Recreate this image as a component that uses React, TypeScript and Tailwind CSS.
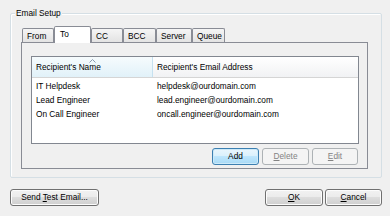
import type { ReactNode } from 'react';

type ButtonKind = 'normal' | 'default' | 'disabled';

const buttonStyles: Record<ButtonKind, string> = {
  normal:
    'border-[#707070] text-black bg-[linear-gradient(to_bottom,#f2f2f2_0%,#ebebeb_49%,#dddddd_50%,#cfcfcf_100%)] shadow-[inset_0_0_0_1px_#fcfcfc]',
  default:
    'border-[#3c7fb1] text-black bg-[linear-gradient(to_bottom,#eaf6fd_0%,#d9f0fc_49%,#bee6fd_50%,#a7d9f5_100%)] shadow-[inset_0_0_0_1px_#cdeaf9]',
  disabled: 'border-[#adb2b5] text-[#838383] bg-[#f4f4f4]',
};

function WinButton({ kind = 'normal', width, children }: { kind?: ButtonKind; width: string; children: ReactNode }) {
  return (
    <button
      className={`${width} h-[17px] flex items-center justify-center rounded-[3px] border leading-none ${buttonStyles[kind]}`}
    >
      <span>{children}</span>
    </button>
  );
}

const tabs = [
  { label: 'From', width: 'w-[32px]' },
  { label: 'To', width: 'w-[37px]', active: true },
  { label: 'CC', width: 'w-[32px]' },
  { label: 'BCC', width: 'w-[33px]' },
  { label: 'Server', width: 'w-[36px]' },
  { label: 'Queue', width: 'w-[33px]' },
];

const recipients = [
  { name: 'IT Helpdesk', email: 'helpdesk@ourdomain.com' },
  { name: 'Lead Engineer', email: 'lead.engineer@ourdomain.com' },
  { name: 'On Call Engineer', email: 'oncall.engineer@ourdomain.com' },
];

export default function App() {
  return (
    <div className="w-[390px] h-[216px] bg-[#f0f0f0] pl-[10px] pr-[8px] pt-[13px] overflow-hidden font-['Liberation_Sans',Arial,sans-serif] text-[8.3px] text-black">
      {/* group box */}
      <div className="relative w-[372px] h-[165px] border border-[#d5dfe5] rounded-[2px] shadow-[inset_1px_1px_0_#ffffff] flex flex-col pl-[10px] pr-[13px] pt-[12px]">
        <span className="absolute left-[4px] -top-[6px] px-[1px] bg-[#f0f0f0] leading-[10px]">Email Setup</span>

        <div className="flex items-start h-[16px] pl-[1px]">
          {tabs.map((tab) =>
            tab.active ? (
              <div
                key={tab.label}
                className={`${tab.width} relative z-10 h-[17px] bg-white border border-b-0 border-[#898c95] rounded-t-[2px] pl-[5px] pt-[2px] leading-[10px]`}
              >
                {tab.label}
              </div>
            ) : (
              <div
                key={tab.label}
                className={`${tab.width} mt-[2px] h-[14px] border border-b-0 border-[#898c95] rounded-t-[2px] bg-[linear-gradient(to_bottom,#f5f5f5,#e3e3e3)] pl-[4px] pt-[2px] leading-[10px]`}
              >
                {tab.label}
              </div>
            ),
          )}
        </div>

        {/* tab page */}
        <div className="w-[347px] h-[127px] border border-[#898c95] bg-[#f0f0f0] pl-[9px] pr-[8px] pt-[13px] flex flex-col">
          <div className="h-[88px] border border-[#828790] bg-white flex flex-col">
            <div className="flex h-[21px] border-b border-[#d5d5d5]">
              <div className="relative w-[121px] border-r border-[#c6e1f0] bg-[linear-gradient(to_bottom,#f6fbfd,#e1f1f9)] pl-[4px] flex items-center">
                <svg className="absolute left-[57px] top-[2px]" width="7" height="4" viewBox="0 0 7 4">
                  <path d="M0.5 3.5 L3.5 0.5 L6.5 3.5" fill="none" stroke="#8b9bb0" strokeWidth="1" />
                </svg>
                Recipient's Name
              </div>
              <div className="flex-1 bg-[linear-gradient(to_bottom,#ffffff,#f1f2f4)] pl-[4px] flex items-center">
                Recipient's Email Address
              </div>
            </div>
            <div className="pt-[1px]">
              {recipients.map((r) => (
                <div key={r.name} className="flex h-[14px] items-center">
                  <div className="w-[121px] pl-[4px]">{r.name}</div>
                  <div className="pl-[4px]">{r.email}</div>
                </div>
              ))}
            </div>
          </div>

          <div className="flex justify-end gap-[3px] mt-[4px] pr-[1px]">
            <WinButton kind="default" width="w-[47px]">
              Add
            </WinButton>
            <WinButton kind="disabled" width="w-[47px]">
              <u>D</u>elete
            </WinButton>
            <WinButton kind="disabled" width="w-[46px]">
              <u>E</u>dit
            </WinButton>
          </div>
        </div>
      </div>

      {/* dialog buttons */}
      <div className="flex items-center mt-[11px]">
        <WinButton width="w-[89px]">
          Send <u>T</u>est Email...
        </WinButton>
        <div className="flex-1" />
        <div className="flex gap-[2px]">
          <WinButton width="w-[58px]">
            <u>O</u>K
          </WinButton>
          <WinButton width="w-[57px]">
            <u>C</u>ancel
          </WinButton>
        </div>
      </div>
    </div>
  );
}
